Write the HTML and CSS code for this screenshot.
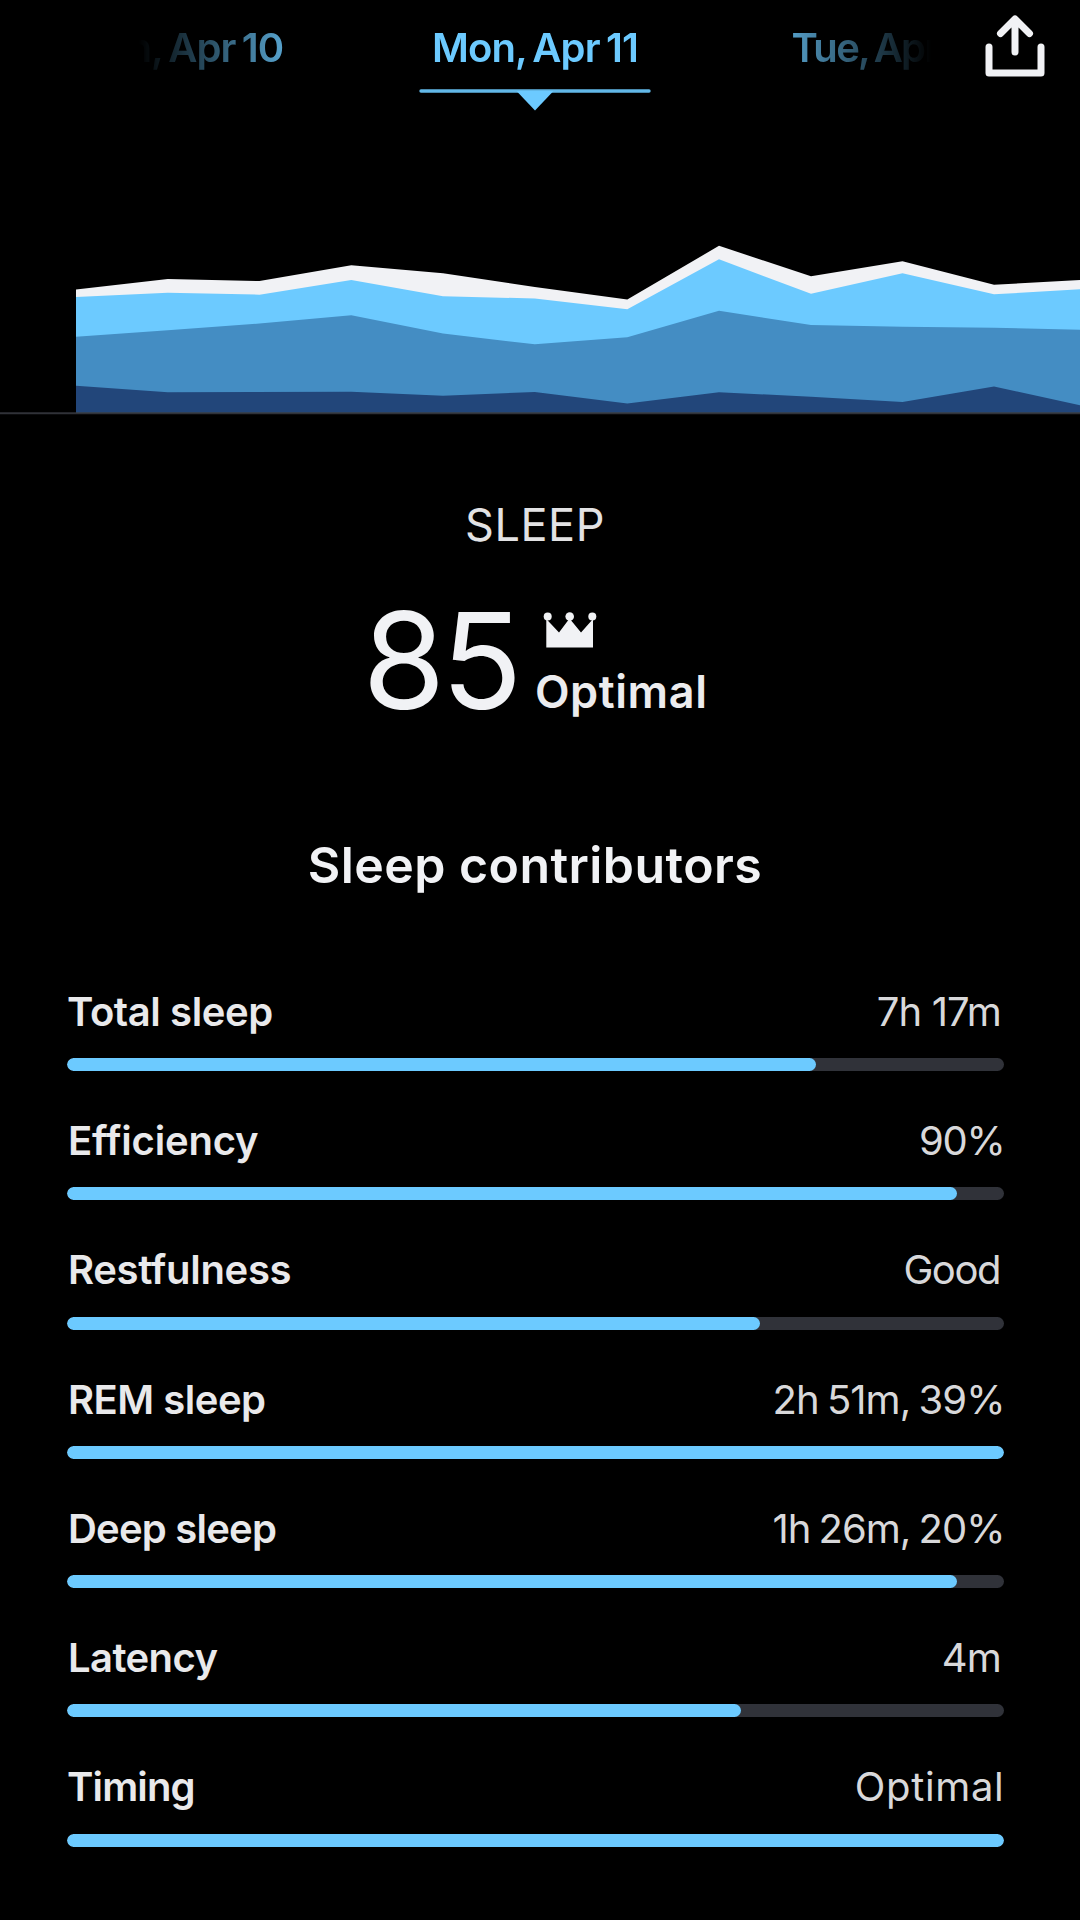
FILE: index.html
```html
<!DOCTYPE html>
<html lang="en">
<head>
<meta charset="utf-8">
<title>Sleep</title>
<link rel="stylesheet" href="styles.css">
</head>
<body>
<header class="header">
  <nav class="dates">
    <div class="date date--prev"><span>Sun, Apr 10</span></div>
    <div class="date date--active"><span>Mon, Apr 11</span></div>
    <div class="date date--next"><span>Tue, Apr 12</span></div>
    <svg class="indicator" viewBox="0 0 232 24" aria-hidden="true">
      <path d="M2 4H230" stroke="#62b8e8" stroke-width="3.4" stroke-linecap="round"/>
      <path d="M97.5 4H134.5L116 23.5Z" fill="#6ccaff"/>
    </svg>
  </nav>
  <svg class="share" viewBox="0 0 68 72" role="img" aria-label="Share">
    <path d="M34 42V10M19.5 23.5L34 9L48.500 23.500M8 37V63H60V37" fill="none" stroke="#f1f2f5" stroke-width="7" stroke-linecap="round" stroke-linejoin="round"/>
  </svg>
</header>

<svg class="chart" viewBox="0 120 1080 295" role="img" aria-label="Sleep stages">
  <path fill="#f1f2f5" d="M76 289.600L167.800 279L259.500 281L351.300 265.300L443 273.300L534.800 287L627.300 299.500L719 245.800L811 276.300L902.500 261.300L994 284.700L1086 279.800V412.500H76Z"/>
  <path fill="#6ccaff" d="M76 297L167.800 292.700L259.500 294.700L351.300 280L443 296.300L534.800 298.500L627.300 309.300L719 259.300L811 293.700L902.500 273.300L994 294.300L1086 289V412.500H76Z"/>
  <path fill="#448dc3" d="M76 336.700L167.800 330.300L259.500 323.500L351.300 315.300L443 333.500L534.800 344.300L627.300 337.300L719 310.700L811 325L902.500 326.700L994 327.700L1086 329.800V412.500H76Z"/>
  <path fill="#22467a" d="M76 385.700L167.800 392.300L351.300 391.700L443 395.700L534.800 392L627.300 403.500L719 392.300L811 396.700L902.500 402L994 386.500L1086 406.500V412.500H76Z"/>
  <path d="M0 413.300H1080" stroke="#303238" stroke-width="2"/>
</svg>

<main class="content">
  <h1 class="title">SLEEP</h1>
  <div class="score">
    <div class="score-value">85</div>
    <div class="score-rating">
      <svg class="crown" viewBox="0 0 54 36" aria-hidden="true">
        <g fill="#f1f2f5">
          <path d="M3.300 7L16 20.500L26.500 6.500L38 20.500L50 7V35.500H3.300Z"/>
          <circle cx="4.700" cy="4.500" r="4"/><circle cx="26.700" cy="4.500" r="4.300"/><circle cx="49.300" cy="4.500" r="4"/>
        </g>
      </svg>
      <div class="score-label">Optimal</div>
    </div>
  </div>
  <h2 class="subtitle">Sleep contributors</h2>
</main>

<section class="contributors">
  <div class="row row--total">
    <div class="row-text"><span class="label">Total sleep</span><span class="value">7h 17m</span></div>
    <div class="track"><div class="fill" style="width:80%"></div></div>
  </div>
  <div class="row row--efficiency">
    <div class="row-text"><span class="label">Efficiency</span><span class="value">90%</span></div>
    <div class="track"><div class="fill" style="width:95%"></div></div>
  </div>
  <div class="row row--restfulness">
    <div class="row-text"><span class="label">Restfulness</span><span class="value">Good</span></div>
    <div class="track"><div class="fill" style="width:74%"></div></div>
  </div>
  <div class="row row--rem">
    <div class="row-text"><span class="label">REM sleep</span><span class="value">2h 51m, 39%</span></div>
    <div class="track"><div class="fill" style="width:100%"></div></div>
  </div>
  <div class="row row--deep">
    <div class="row-text"><span class="label">Deep sleep</span><span class="value">1h 26m, 20%</span></div>
    <div class="track"><div class="fill" style="width:95%"></div></div>
  </div>
  <div class="row row--latency">
    <div class="row-text"><span class="label">Latency</span><span class="value">4m</span></div>
    <div class="track"><div class="fill" style="width:72%"></div></div>
  </div>
  <div class="row row--timing">
    <div class="row-text"><span class="label">Timing</span><span class="value">Optimal</span></div>
    <div class="track"><div class="fill" style="width:100%"></div></div>
  </div>
</section>
</body>
</html>
```
FILE: styles.css
```css
* {
  box-sizing: border-box;
}

body {
  margin: 0;
  width: 1080px;
  height: 1920px;
  overflow: hidden;
  background: #000;
  color: #f1f2f5;
  font-family: Inter, "Liberation Sans", sans-serif;
}

svg {
  display: block;
}

.header {
  display: flex;
  height: 120px;
  padding-left: 139px;
}

.dates {
  display: grid;
  grid-template-columns: minmax(0, 1fr) auto minmax(0, 1fr);
  grid-template-rows: 48px 24px;
  row-gap: 15.500px;
  width: 792px;
  height: 120px;
  padding-top: 23.500px;
  overflow: hidden;
  color: #6ccaff;
  font-size: 40px;
  font-weight: 600;
  line-height: 48px;
  letter-spacing: -0.870px;
  word-spacing: -3px;
  white-space: nowrap;
  -webkit-mask-image: linear-gradient(90deg, transparent 0, #000 180px, #000 612px, transparent 100%);
  mask-image: linear-gradient(90deg, transparent 0, #000 180px, #000 612px, transparent 100%);
}

.date {
  display: flex;
}

.date--prev {
  justify-content: flex-end;
  padding-right: 148.600px;
}

.date--next {
  padding-left: 153.600px;
  letter-spacing: -1.700px;
}

.indicator {
  grid-column: 1 / -1;
  justify-self: center;
  width: 232px;
  height: 24px;
}

.share {
  width: 68px;
  height: 72px;
  margin: 10px 0 0 50px;
}

.chart {
  width: 1080px;
  height: 295px;
}

.content {
  display: flex;
  flex-direction: column;
  align-items: center;
  width: 1070px;
  padding-top: 83px;
}

.title {
  margin: 0;
  color: #e2e2e4;
  font-size: 45px;
  font-weight: 400;
  line-height: 54px;
  letter-spacing: 0.570px;
}

.score {
  display: flex;
  gap: 16.500px;
  height: 134px;
  margin: 41px 0 0 0;
}

.score-value {
  font-size: 134px;
  line-height: 134px;
  letter-spacing: -4.200px;
}

.score-rating {
  display: flex;
  flex-direction: column;
  gap: 17px;
  padding-top: 18.500px;
}

.crown {
  width: 54px;
  height: 36px;
  margin-left: 8.500px;
}

.score-label {
  color: #ececee;
  font-size: 45px;
  font-weight: 600;
  line-height: 54px;
  letter-spacing: 0.600px;
}

.subtitle {
  margin: 107.500px 0 0;
  font-size: 50px;
  font-weight: 600;
  line-height: 60px;
  letter-spacing: 0.440px;
}

.contributors {
  display: flex;
  flex-direction: column;
  gap: 45.750px;
  width: 936.500px;
  margin: 93.400px 0 0 67px;
}

.row {
  height: 83.500px;
}

.row-text {
  display: flex;
  justify-content: space-between;
  font-size: 40px;
  line-height: 48px;
  white-space: nowrap;
}

.label {
  margin-left: 1px;
  color: #e9e9eb;
  font-weight: 600;
  letter-spacing: -0.400px;
}

.value {
  margin-right: -1px;
  color: #d8d8da;
  letter-spacing: -0.850px;
}

.track {
  height: 13px;
  margin-top: 22.300px;
  overflow: hidden;
  border-radius: 7px;
  background: #303239;
}

.fill {
  height: 100%;
  border-radius: 7px;
  background: #6ccaff;
}

/* Optical spacing for each line of text */
.row--total .label {
  margin-left: 0;
}

.row--total .value {
  margin-right: 2.500px;
}

.row--efficiency .label {
  letter-spacing: -0.200px;
}

.row--efficiency .value {
  letter-spacing: -1.280px;
}

.row--restfulness .label {
  letter-spacing: -0.320px;
}

.row--restfulness .value {
  margin-right: 3.500px;
  letter-spacing: -1.440px;
}

.row--rem .label {
  letter-spacing: -0.500px;
}

.row--rem .value {
  word-spacing: -2px;
  letter-spacing: -0.950px;
}

.row--deep .label {
  letter-spacing: -0.780px;
}

.row--deep .value {
  word-spacing: -2px;
  letter-spacing: -1px;
}

.row--latency .label {
  letter-spacing: -0.590px;
}

.row--latency .value {
  margin-right: 2.500px;
}

.row--timing .label {
  margin-left: 0;
  letter-spacing: -0.850px;
}

.row--timing .value {
  margin-right: -1px;
  letter-spacing: 0.680px;
}
```
